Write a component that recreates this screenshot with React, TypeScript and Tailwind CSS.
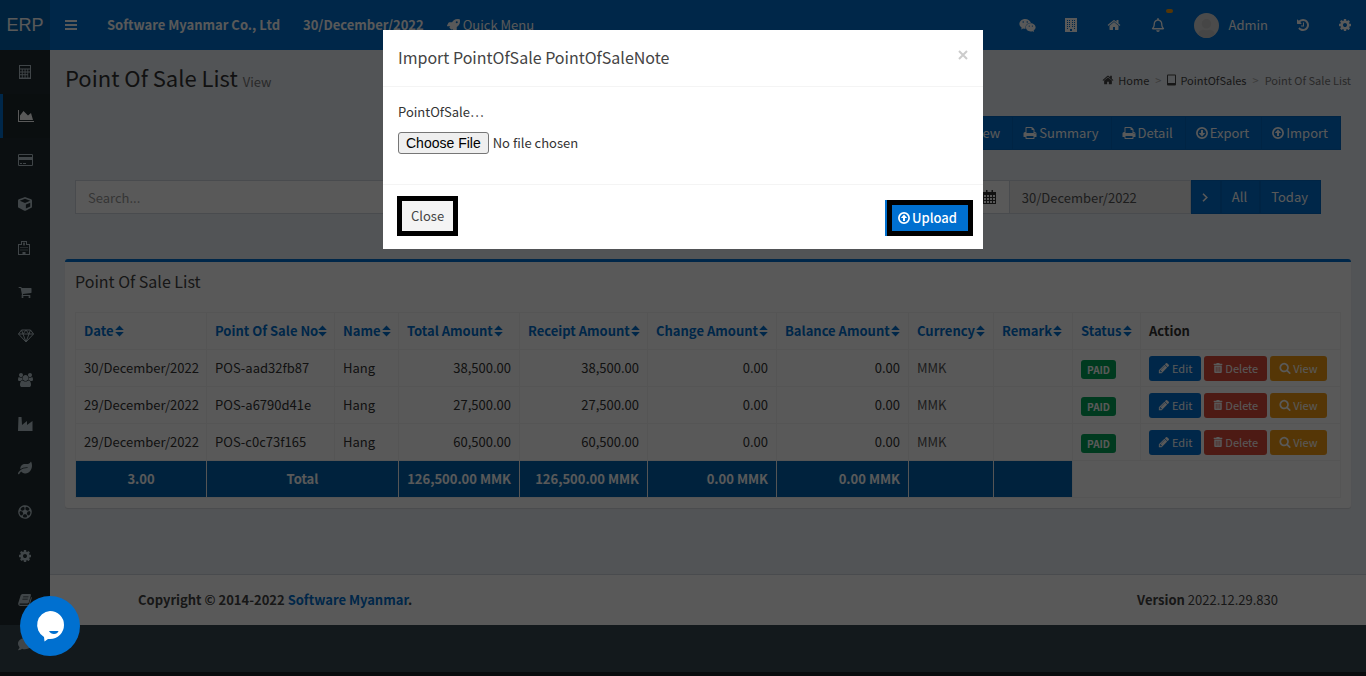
import React, { useState } from 'react';
import {
  FaCube,
  FaLeaf,
  FaRegFutbol,
  FaComment,
  FaRocket,
  FaWeixin,
  FaRegBell,
  FaTrashAlt,
  FaPlus,
  FaUser,
} from 'react-icons/fa';

const paths = {
  cog: 'M1152 896q0-106-75-181t-181-75-181 75-75 181 75 181 181 75 181-75 75-181zm512-109v222q0 12-8 23t-20 13l-185 28q-19 54-39 91 35 50 107 138 10 12 10 25t-9 23q-27 37-99 108t-94 71q-12 0-26-9l-138-108q-44 23-91 38-16 136-29 186-7 28-36 28h-222q-14 0-24.5-8.5t-11.5-21.5l-28-184q-49-16-90-37l-141 107q-10 9-25 9-14 0-25-11-126-114-165-168-7-10-7-23 0-12 8-23 15-21 51-66.5t54-70.5q-27-50-41-99l-183-27q-13-2-21-12.5t-8-23.5v-222q0-12 8-23t19-13l186-28q14-46 39-92-40-57-107-138-10-12-10-24 0-10 9-23 26-36 98.5-107.5t94.5-71.5q13 0 26 10l138 107q44-23 91-38 16-136 29-186 7-28 36-28h222q14 0 24.5 8.5t11.5 21.5l28 184q49 16 90 37l142-107q9-9 24-9 13 0 25 10 129 119 165 170 7 8 7 22 0 12-8 23-15 21-51 66.5t-54 70.5q26 50 41 98l183 28q13 2 21 12.5t8 23.5z',
  home: 'M1472 992v480q0 26-19 45t-45 19h-384v-384h-256v384h-384q-26 0-45-19t-19-45v-480q0-1 .5-3t.5-3l575-474 575 474q1 2 1 6zm223-69l-62 74q-8 9-21 11h-3q-13 0-21-7l-692-577-692 577q-12 8-24 7-13-2-21-11l-62-74q-8-10-7-23.5t11-21.5l719-599q32-26 76-26t76 26l244 204v-195q0-14 9-23t23-9h192q14 0 23 9t9 23v408l219 182q10 8 11 21.5t-7 23.5z',
  search: 'M1216 832q0-185-131.5-316.5t-316.5-131.5-316.5 131.5-131.5 316.5 131.5 316.5 316.5 131.5 316.5-131.5 131.5-316.5zm512 832q0 52-38 90t-90 38q-54 0-90-38l-343-342q-179 124-399 124-143 0-273.5-55.5t-225-150-150-225-55.5-273.5 55.5-273.5 150-225 225-150 273.5-55.5 273.5 55.5 225 150 150 225 55.5 273.5q0 220-124 399l343 343q37 37 37 90z',
  print: 'M448 1536h896v-256h-896v256zm0-640h896v-384h-160q-40 0-68-28t-28-68v-160h-640v640zm1152 64q0-26-19-45t-45-19-45 19-19 45 19 45 45 19 45-19 19-45zm128 0v416q0 13-9.5 22.5t-22.5 9.5h-224v160q0 40-28 68t-68 28h-960q-40 0-68-28t-28-68v-160h-224q-13 0-22.5-9.5t-9.5-22.5v-416q0-79 56.5-135.5t135.5-56.5h64v-544q0-40 28-68t68-28h672q40 0 88 20t76 48l152 152q28 28 48 76t20 88v256h64q79 0 135.5 56.5t56.5 135.5z',
  cart: 'M704 1536q0 52-38 90t-90 38-90-38-38-90 38-90 90-38 90 38 38 90zm896 0q0 52-38 90t-90 38-90-38-38-90 38-90 90-38 90 38 38 90zm128-1088v512q0 24-16.5 42.5t-40.5 21.5l-1044 122q13 60 13 70 0 16-24 64h920q26 0 45 19t19 45-19 45-45 19h-1024q-26 0-45-19t-19-45q0-11 8-31.5t16-36 21.5-40 15.5-29.5l-177-823h-204q-26 0-45-19t-19-45 19-45 45-19h256q16 0 28.5 6.5t19.5 15.5 13 24.5 8 26 5.5 29.5 4.5 26h1201q26 0 45 19t19 45z',
  pencil: 'M491 1536l91-91-235-235-91 91v107h128v128h107zm523-928q0-22-22-22-10 0-17 7l-542 542q-7 7-7 17 0 22 22 22 10 0 17-7l542-542q7-7 7-17zm-54-192l416 416-832 832h-416v-416zm683 96q0 53-37 90l-166 166-416-416 166-165q36-38 90-38 53 0 91 38l235 234q37 39 37 91z',
  history: 'M1664 896q0 156-61 298t-164 245-245 164-298 61q-172 0-327-72.5t-264-204.5q-7-10-6.5-22.5t8.5-20.5l137-138q10-9 25-9 16 2 23 12 73 95 179 147t225 52q104 0 198.5-40.5t163.5-109.5 109.5-163.5 40.5-198.5-40.5-198.5-109.5-163.5-163.5-109.5-198.5-40.5q-98 0-188 35.5t-160 101.5l137 138q31 30 14 69-17 40-59 40h-448q-26 0-45-19t-19-45v-448q0-42 40-59 39-17 69 14l130 129q107-101 244.5-156.5t284.5-55.5q156 0 298 61t245 164 164 245 61 298zm-640-288v448q0 14-9 23t-23 9h-320q-14 0-23-9t-9-23v-64q0-14 9-23t23-9h224v-352q0-14 9-23t23-9h64q14 0 23 9t9 23z',
};

const Glyph = ({ name, size = 14 }: { name: keyof typeof paths; size?: number }) => (
  <svg width={size} height={size} viewBox="0 0 1792 1792" fill="currentColor" className="shrink-0">
    <path d={paths[name]} />
  </svg>
);

const CalculatorIcon = () => (
  <svg width="14" height="14" viewBox="0 0 14 14" fill="currentColor">
    <path fillRule="evenodd" d="M1 0h12v14H1zM2 1v2.5h10V1zM2 4.6v1.8h1.8V4.600zM4.700 4.600v1.800h1.900v-1.800zM7.500 4.600v1.800h1.900v-1.800zM10.200 4.600v1.800H12v-1.800zM2 7.400v1.900h1.800v-1.900zM4.700 7.400v1.900h1.900v-1.900zM7.500 7.400v1.900h1.900v-1.900zM2 10.300v2.200h1.800v-2.200zM4.700 10.300v2.200h1.900v-2.200zM7.500 10.300v2.200h1.900v-2.200zM10.200 7.400v5.100H12V7.400z" />
  </svg>
);

const AreaChartIcon = () => (
  <svg width="16" height="14" viewBox="0 0 2048 1792" fill="currentColor">
    <path d="M2048 1536v128H0V128h128v1408h1920zM1664 512l256 896H256V832l448-576 576 576z" />
  </svg>
);

const CreditCardIcon = () => (
  <svg width="15" height="14" viewBox="0 0 15 14" fill="currentColor">
    <path fillRule="evenodd" d="M1.200 1h12.600Q15 1 15 2.200v9.600Q15 13 13.800 13H1.200Q0 13 0 11.800V2.200Q0 1 1.200 1zM1 2v2h13V2zM1 7v5h13V7zM2 10h2v1H2zM5 10h3v1H5z" />
  </svg>
);

const HospitalIcon = () => (
  <svg width="12" height="14" viewBox="0 0 12 14" fill="currentColor">
    <path fillRule="evenodd" d="M3 0h6v3h3v11H0V3h3zM4 1v3H1v9h3.500v-2h3v2H11V4H8V1zM5 1.500h.7v1h.6v-1H7v3h-.7v-1h-.6v1H5zM2.500 6h1v1h-1zM4.500 6h1v1h-1zM6.500 6h1v1h-1zM8.500 6h1v1h-1zM2.500 8.500h1v1h-1zM4.500 8.500h1v1h-1zM6.500 8.500h1v1h-1zM8.500 8.500h1v1h-1z" />
  </svg>
);

const DiamondIcon = () => (
  <svg width="16" height="14" viewBox="0 0 16 14" fill="none" stroke="currentColor" strokeWidth="1" strokeLinejoin="round">
    <path d="M3.500 1h9L15.500 5 8 13 .500 5zM.500 5h15M5 5l3 8 3-8M3.500 1 5 5l3-4 3 4 1.500-4" />
  </svg>
);

const GroupIcon = () => (
  <svg width="15" height="14" viewBox="0 0 1920 1792" fill="currentColor">
    <path d="M593 896q-162 5-265 128h-134q-82 0-138-40.5t-56-118.5q0-353 124-353 6 0 43.500 21t97.500 42.500 119 21.500q67 0 133-23-5 37-5 66 0 139 81 256zm1071 637q0 120-73 189.500t-194 69.500h-874q-121 0-194-69.500t-73-189.500q0-53 3.500-103.500t14-109 26.500-108.500 43-97.500 62-81 85.500-53.500 111.500-20q10 0 43 21.500t73 48 107 48 135 21.500 135-21.500 107-48 73-48 43-21.500q61 0 111.500 20t85.500 53.500 62 81 43 97.500 26.500 108.500 14 109 3.500 103.500zm-1024-1277q0 106-75 181t-181 75-181-75-75-181 75-181 181-75 181 75 75 181zm704 384q0 159-112.500 271.500t-271.500 112.500-271.500-112.500-112.500-271.500 112.500-271.500 271.500-112.500 271.500 112.500 112.500 271.500zm576 225q0 78-56 118.500t-138 40.500h-134q-103-123-265-128 81-117 81-256 0-29-5-66 66 23 133 23 59 0 119-21.500t97.500-42.500 43.500-21q124 0 124 353zm-128-609q0 106-75 181t-181 75-181-75-75-181 75-181 181-75 181 75 75 181z" />
  </svg>
);

const IndustryIcon = () => (
  <svg width="15" height="14" viewBox="0 0 15 14" fill="currentColor">
    <path d="M.5 0h3l.5 8 5-4v4l5.500-4v10H0z" />
  </svg>
);

const BookIcon = () => (
  <svg width="14" height="14" viewBox="0 0 14 14" fill="currentColor">
    <path fillRule="evenodd" d="M4.500 1H12q1.200.1.900 1.300L10.800 9.500q-.4 1-1.500 1H2q-.8.200-.5.800.2.500.9.500h7.500q.7 0 1-.7L13.100 4q.9.400.6 1.300l-2 6.700q-.4 1-1.500 1H2.300Q.5 13 .2 11.300q-.1-.6.100-1.300L2.700 2.300Q3.200 1.200 4.500 1zM5.300 3.400 5 4.200h5.300l.3-.8zM4.600 5.700l-.3.800h5.300l.3-.8z" />
  </svg>
);

const BarsIcon = () => (
  <svg width="12" height="14" viewBox="0 0 12 14" fill="currentColor">
    <path d="M0 2h12v2H0zM0 6h12v2H0zM0 10h12v2H0z" />
  </svg>
);

const BuildingIcon = () => (
  <svg width="12" height="14" viewBox="0 0 12 14" fill="currentColor">
    <path fillRule="evenodd" d="M0 0h12v14H0zM2 2v1h1V2zM4 2v1h1V2zM7 2v1h1V2zM9 2v1h1V2zM2 4v1h1V4zM4 4v1h1V4zM7 4v1h1V4zM9 4v1h1V4zM2 6v1h1V6zM4 6v1h1V6zM7 6v1h1V6zM9 6v1h1V6zM2 8v1h1V8zM4 8v1h1V8zM7 8v1h1V8zM9 8v1h1V8zM2 10v1h1v-1zM9 10v1h1v-1zM5 11v2h2v-2z" />
  </svg>
);

const TabletIcon = () => (
  <svg width="9" height="12" viewBox="0 0 9 12" fill="currentColor">
    <path fillRule="evenodd" d="M1 .5h7q1 0 1 1v9q0 1-1 1H1q-1 0-1-1v-9q0-1 1-1zM1 1.500v7.500h7V1.500z" />
  </svg>
);

const CalendarIcon = () => (
  <svg width="13" height="14" viewBox="0 0 13 14" fill="currentColor" className="shrink-0">
    <path fillRule="evenodd" d="M3 0h1.500v2h4V0H10v2h3v12H0V2h3zM1 5v2h2V5zM4 5v2h2V5zM7 5v2h2V5zM10 5v2h2V5zM1 8v2h2V8zM4 8v2h2V8zM7 8v2h2V8zM10 8v2h2V8zM1 11v2h2v-2zM4 11v2h2v-2zM7 11v2h2v-2zM10 11v2h2v-2z" />
  </svg>
);

const ArrowCircle = ({ down = false }: { down?: boolean }) => (
  <svg width="12" height="12" viewBox="0 0 12 12" className={down ? 'shrink-0 rotate-180' : 'shrink-0'}>
    <circle cx="6" cy="6" r="5.100" fill="none" stroke="currentColor" strokeWidth="1.700" />
    <path d="M6 2.600 9.200 6H7v3H5V6H2.800z" fill="currentColor" />
  </svg>
);

const Chevron = ({ left = false }: { left?: boolean }) => (
  <svg
    width="6"
    height="9"
    viewBox="0 0 6 9"
    fill="none"
    stroke="currentColor"
    strokeWidth="1.600"
    className={left ? 'rotate-180' : ''}
  >
    <path d="M1 .800 4.800 4.500 1 8.200" />
  </svg>
);

const SortIcon = () => (
  <svg width="9" height="12" viewBox="0 0 9 12" fill="currentColor" className="shrink-0">
    <path d="M4.500.500 8.800 5H.200zM4.500 11.500.200 7h8.600z" />
  </svg>
);

const sidebar = [
  { label: 'Calculator', icon: <CalculatorIcon /> },
  { label: 'Sales', icon: <AreaChartIcon />, active: true },
  { label: 'Payments', icon: <CreditCardIcon /> },
  { label: 'Products', icon: <FaCube /> },
  { label: 'Branches', icon: <HospitalIcon /> },
  { label: 'Purchases', icon: <Glyph name="cart" /> },
  { label: 'Assets', icon: <DiamondIcon /> },
  { label: 'Employees', icon: <GroupIcon /> },
  { label: 'Manufacturing', icon: <IndustryIcon /> },
  { label: 'Leave', icon: <FaLeaf /> },
  { label: 'Activities', icon: <FaRegFutbol /> },
  { label: 'Settings', icon: <Glyph name="cog" /> },
  { label: 'Manual', icon: <BookIcon /> },
  { label: 'Messages', icon: <FaComment /> },
];

const columns = [
  { label: 'Date', width: 'w-[131px]' },
  { label: 'Point Of Sale No', width: 'w-[128px]', tight: true },
  { label: 'Name', width: 'w-[64px]' },
  { label: 'Total Amount', width: 'w-[121px]' },
  { label: 'Receipt Amount', width: 'w-[128px]' },
  { label: 'Change Amount', width: 'w-[129px]' },
  { label: 'Balance Amount', width: 'w-[132px]' },
  { label: 'Currency', width: 'w-[85px]' },
  { label: 'Remark', width: 'w-[79px]' },
  { label: 'Status', width: 'w-[68px]' },
];

const sales = [
  { date: '30/December/2022', no: 'POS-aad32fb87', name: 'Hang', amount: '38,500.00' },
  { date: '29/December/2022', no: 'POS-a6790d41e', name: 'Hang', amount: '27,500.00' },
  { date: '29/December/2022', no: 'POS-c0c73f165', name: 'Hang', amount: '60,500.00' },
];

const Header = () => (
  <header className="flex h-[50px] bg-[#0070d0] text-white">
    <a href="#" className="flex w-[50px] items-center justify-center bg-[#0063b0] font-['Liberation_Sans',sans-serif] text-lg">
      ERP
    </a>
    <nav className="flex flex-1 items-center justify-between">
      <div className="flex items-center">
        <button aria-label="Toggle navigation" className="px-[15px]"><BarsIcon /></button>
        <a href="#" className="pl-[15px] pr-2 font-bold">Software Myanmar Co., Ltd</a>
        <a href="#" className="pl-[15px] pr-2 font-bold">30/December/2022</a>
        <a href="#" className="flex items-center gap-[3px] px-[15px]"><FaRocket size={13} />Quick Menu</a>
      </div>
      <div className="flex items-center">
        <a href="#" aria-label="Chat" className="px-[14px]"><FaWeixin size={17} /></a>
        <a href="#" aria-label="Company" className="px-[15px]"><BuildingIcon /></a>
        <a href="#" aria-label="Home" className="px-[15px]"><Glyph name="home" /></a>
        <a href="#" aria-label="Notifications" className="relative px-[15px]">
          <FaRegBell size={14} />
          <span className="absolute -top-[9px] right-[7px] h-1 w-[7px] rounded-sm bg-[#f39c12]" />
        </a>
        <a href="#" className="flex items-center gap-[9px] px-[14px]">
          <span className="flex h-[25px] w-[25px] items-end justify-center overflow-hidden rounded-full bg-[#d8d8d8] text-[#c8c8c8]">
            <FaUser size={19} />
          </span>
          Admin
        </a>
        <a href="#" aria-label="History" className="px-[14px]"><Glyph name="history" /></a>
        <a href="#" aria-label="Settings" className="px-[14px]"><Glyph name="cog" /></a>
      </div>
    </nav>
  </header>
);

const Sidebar = () => (
  <aside className="w-[50px] shrink-0 bg-[#222d32]">
    <ul className="h-0 overflow-visible">
      {sidebar.map((item) => (
        <li key={item.label}>
          <a
            href="#"
            aria-label={item.label}
            className={
              item.active
                ? 'flex h-11 items-center border-l-[3px] border-[#0070d0] bg-[#1e282c] pl-[15px] text-sm text-white'
                : 'flex h-11 items-center border-l-[3px] border-transparent pl-[15px] text-sm text-[#b8c7ce]'
            }
          >
            {item.icon}
          </a>
        </li>
      ))}
    </ul>
  </aside>
);

const toolButton = 'flex h-[34px] items-center gap-[2px] border border-[#0068c2] bg-[#0070d0] pl-[10px] pr-3 text-white';

const Filters = () => (
  <div className="mt-[30px] flex gap-[30px] pl-[10px] pr-[30px]">
    <input
      type="text"
      aria-label="Search"
      placeholder="Search..."
      className="h-[34px] min-w-0 flex-1 border border-[#d2d6de] bg-white px-3 placeholder:text-[#999]"
    />
    <div className="flex">
      <button aria-label="Previous day" className={toolButton}><Chevron left /></button>
      <span className="flex h-[34px] w-10 items-center justify-center border border-[#d2d6de] bg-white text-[#333]">
        <CalendarIcon />
      </span>
      <input
        type="text"
        aria-label="Date"
        readOnly
        value="30/December/2022"
        className="h-[34px] w-[181px] border border-l-0 border-[#d2d6de] bg-[#eee] px-3 text-[#555]"
      />
      <button aria-label="Next day" className={toolButton}><Chevron /></button>
      <button className={toolButton}>All</button>
      <button className={toolButton}>Today</button>
    </div>
  </div>
);

const cell = 'h-[37px] border border-[#f4f4f4] px-2';
const totalCell = 'h-[37px] border border-[#f4f4f4] bg-[#0063b0] px-2 font-bold text-white';
const smallButton = 'flex h-[25px] items-center gap-[2px] rounded-[3px] px-[9px] text-[11px] text-white';

const SalesTable = () => (
  <table className="w-full table-fixed border-collapse whitespace-nowrap text-[#333]">
    <thead>
      <tr>
        {columns.map((col) => (
          <th key={col.label} className={`${cell} ${col.width} text-left font-bold`}>
            <a href="#" className={col.tight ? 'flex items-center text-[#0070d0]' : 'flex items-center gap-px text-[#0070d0]'}>
              {col.label}
              <SortIcon />
            </a>
          </th>
        ))}
        <th className={`${cell} text-left font-bold`}>Action</th>
      </tr>
    </thead>
    <tbody>
      {sales.map((sale) => (
        <tr key={sale.no}>
          <td className={cell}>{sale.date}</td>
          <td className={cell}>{sale.no}</td>
          <td className={cell}>{sale.name}</td>
          <td className={`${cell} text-right`}>{sale.amount}</td>
          <td className={`${cell} text-right`}>{sale.amount}</td>
          <td className={`${cell} text-right`}>0.00</td>
          <td className={`${cell} text-right`}>0.00</td>
          <td className={`${cell} text-[#555]`}>MMK</td>
          <td className={cell} />
          <td className={cell}>
            <span className="mt-[3px] flex h-[19px] w-[35px] items-center justify-center rounded-[3px] bg-[#00a65a] text-[10px] font-bold text-white">
              PAID
            </span>
          </td>
          <td className={cell}>
            <div className="flex gap-[3px]">
              <button className={`${smallButton} bg-[#0070d0]`}><Glyph name="pencil" size={12} />Edit</button>
              <button className={`${smallButton} bg-[#dd4b39]`}><FaTrashAlt size={10} />Delete</button>
              <button className={`${smallButton} bg-[#f39c12]`}><Glyph name="search" size={12} />View</button>
            </div>
          </td>
        </tr>
      ))}
      <tr>
        <td className={`${totalCell} text-center`}>3.00</td>
        <td colSpan={2} className={`${totalCell} text-center`}>Total</td>
        <td className={`${totalCell} text-right`}>126,500.00 MMK</td>
        <td className={`${totalCell} text-right`}>126,500.00 MMK</td>
        <td className={`${totalCell} text-right`}>0.00 MMK</td>
        <td className={`${totalCell} text-right`}>0.00 MMK</td>
        <td className={totalCell} />
        <td className={totalCell} />
        <td colSpan={2} className={cell} />
      </tr>
    </tbody>
  </table>
);

const ImportDialog = ({ onClose }: { onClose: () => void }) => (
  <div className="fixed inset-0 bg-black/65">
    <div role="dialog" aria-labelledby="import-title" className="mx-auto mt-[30px] w-[600px] max-w-full bg-white text-[#333]">
      <div className="flex items-start justify-between border-b border-[#f4f4f4] px-[15px] pb-4 pt-[14px]">
        <h4 id="import-title" className="text-base leading-[26px] text-[#444]">Import PointOfSale PointOfSaleNote</h4>
        <button aria-label="Dismiss" onClick={onClose} className="py-[6px] text-[#ccc]">
          <svg width="10" height="10" viewBox="0 0 10 10" stroke="currentColor" strokeWidth="2">
            <path d="M1 1l8 8M9 1 1 9" />
          </svg>
        </button>
      </div>
      <div className="px-[15px] pb-[30px] pt-[15px]">
        <label htmlFor="import-file" className="mb-[10px] block">PointOfSale…</label>
        <input
          id="import-file"
          type="file"
          className="block h-[22px] w-full file:mr-1 file:h-[22px] file:rounded-[3px] file:border file:border-solid file:border-[#767676] file:bg-[#efefef] file:px-[7px] file:font-['Liberation_Sans',sans-serif] file:text-sm file:leading-[18px] file:text-black"
        />
      </div>
      <div className="flex items-center justify-between border-t border-[#f4f4f4] px-[10px] pb-[13px] pl-[14px] pt-[11px]">
        <button onClick={onClose} className="h-10 border-[5px] border-black bg-[#f4f4f4] px-[9px] text-[#444]">Close</button>
        <button className="mt-1 flex h-9 items-center gap-[2px] border-[5px] border-black bg-[#0070d0] pl-[6px] pr-[11px] font-medium text-white shadow-[-2px_0_0_#0070d0]">
          <ArrowCircle />
          Upload
        </button>
      </div>
    </div>
  </div>
);

export default function App() {
  const [importOpen, setImportOpen] = useState(true);

  return (
    <div className="flex min-h-screen flex-col border-b-4 border-[#1a2226] bg-[#374850] font-['Noto_Sans_CJK_SC','Open_Sans',sans-serif] text-[13px] leading-5 text-[#333]">
      <Header />
      <div className="flex">
        <Sidebar />
        <div className="min-w-0 flex-1 bg-[#ecf0f5]">
          <main className="px-[15px] pb-[66px] pt-[13px]">
            <div className="flex items-center justify-between">
              <h1 className="text-[22px] leading-7">
                Point Of Sale List <small className="text-[13px] text-[#777]">View</small>
              </h1>
              <ol className="flex items-center text-[11px] text-[#444]">
                <li><a href="#" className="flex items-center gap-1"><Glyph name="home" size={12} />Home</a></li>
                <li className="px-[6px] text-[#aaa]">&gt;</li>
                <li><a href="#" className="flex items-center gap-1"><TabletIcon />PointOfSales</a></li>
                <li className="px-[6px] text-[#aaa]">&gt;</li>
                <li className="text-[#777]">Point Of Sale List</li>
              </ol>
            </div>
            <div className="mt-5 flex justify-end -space-x-px pr-[10px]">
              <button className={toolButton}><FaPlus size={11} />New</button>
              <button className={toolButton}><Glyph name="print" />Summary</button>
              <button className={toolButton}><Glyph name="print" />Detail</button>
              <button className={toolButton}><ArrowCircle down />Export</button>
              <button className={toolButton} onClick={() => setImportOpen(true)}><ArrowCircle />Import</button>
            </div>
            <Filters />
            <section className="mt-[45px] rounded-[3px] border-t-[3px] border-[#0070d0] bg-white px-[10px] pb-[10px] shadow-[0_1px_1px_rgba(0,0,0,0.1)]">
              <h3 className="pb-5 pt-2 text-base leading-[22px] text-[#444]">Point Of Sale List</h3>
              <SalesTable />
            </section>
          </main>
          <footer className="border-t border-[#d2d6de] bg-white py-[15px] text-[#444]">
            <div className="mx-auto flex max-w-[1170px] justify-between px-[15px]">
              <strong>Copyright © 2014-2022 <a href="#" className="text-[#0070d0]">Software Myanmar</a>.</strong>
              <span><b>Version</b> 2022.12.29.830</span>
            </div>
          </footer>
        </div>
      </div>

      {importOpen && <ImportDialog onClose={() => setImportOpen(false)} />}

      <button aria-label="Open chat" className="fixed bottom-5 left-5 flex h-[60px] w-[60px] items-center justify-center rounded-full bg-[#0070d0]">
        <svg width="30" height="32" viewBox="0 0 30 32">
          <path d="M15 1a14 14 0 1 1 0 28q-1 0-2 0L9.500 31.500 9 27A14 14 0 0 1 15 1z" fill="#fff" />
          <path d="M14 21h9.500q-1 3-4.500 3t-5-3z" fill="#0070d0" />
        </svg>
      </button>
    </div>
  );
}
